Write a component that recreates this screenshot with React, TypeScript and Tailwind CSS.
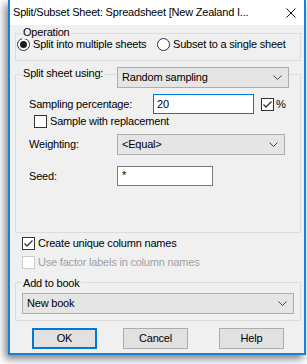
import React from "react";

function Chevron() {
	return (
		<svg width="9" height="5" viewBox="0 0 9 5" className="shrink-0">
			<path d="M0.5 0.5 L4.5 4.5 L8.5 0.5" fill="none" stroke="#444" strokeWidth="1" />
		</svg>
	);
}

function CheckBox({ checked, disabled }: { checked?: boolean; disabled?: boolean }) {
	return (
		<div
			className={`w-[13px] h-[13px] shrink-0 border bg-white flex items-center justify-center ${
				disabled ? "border-[#cccccc]" : "border-[#333333]"
			}`}
		>
			{checked && (
				<svg width="11" height="11" viewBox="0 0 11 11">
					<path d="M1.5 5.5 L4 8 L9.5 2.5" fill="none" stroke="#333" strokeWidth="1.3" />
				</svg>
			)}
		</div>
	);
}

function Radio({ checked }: { checked?: boolean }) {
	return (
		<div className="w-[13px] h-[13px] shrink-0 rounded-full border border-[#333333] bg-white flex items-center justify-center">
			{checked && <div className="w-[7px] h-[7px] rounded-full bg-[#1a1a1a]" />}
		</div>
	);
}

function Select({ value, width }: { value: string; width: string }) {
	return (
		<div
			className={`${width} h-[21px] border border-[#adadad] bg-[#e5e5e5] flex items-center justify-between pl-[4px] pr-[6px]`}
		>
			<span>{value}</span>
			<Chevron />
		</div>
	);
}

function Button({ label, focused }: { label: string; focused?: boolean }) {
	return (
		<div
			className={`w-[65px] h-[21px] bg-[#e1e1e1] flex items-center justify-center ${
				focused ? "border-2 border-[#0078d7]" : "border border-[#adadad]"
			}`}
		>
			{label}
		</div>
	);
}

export default function App() {
	return (
		<div className="w-[307px] h-[364px] bg-white pl-[8px] font-['Liberation_Sans',Arial,sans-serif] text-[11px] tracking-[-0.2px] text-black leading-[13px]">
			<div className="w-[298px] h-[355px] border-x-2 border-b-2 border-[#1c7fd6] bg-[#f0f0f0] flex flex-col shadow-[-3px_4px_8px_rgba(0,0,0,0.5)]">
				{/* title bar */}
				<div className="h-[25px] bg-white flex items-center justify-between pl-[3px] pr-[8px]">
					<span className="text-[11px]">Split/Subset Sheet: Spreadsheet [New Zealand I...</span>
					<svg width="10" height="10" viewBox="0 0 10 10">
						<path d="M0.5 0.5 L9.5 9.5 M9.5 0.5 L0.5 9.5" stroke="#111" strokeWidth="1" />
					</svg>
				</div>

				{/* Operation */}
				<div className="relative mt-[8px] ml-[5px] w-[286px] h-[28px] border border-[#dcdcdc]">
					<span className="absolute left-[6px] top-[-8px] px-[1px] bg-[#f0f0f0]">Operation</span>
					<div className="flex items-center pt-[4px] pl-[1px]">
						<div className="w-[140px] flex items-center gap-[3px]">
							<Radio checked />
							<span>Split into multiple sheets</span>
						</div>
						<div className="flex items-center gap-[3px]">
							<Radio />
							<span>Subset to a single sheet</span>
						</div>
					</div>
				</div>

				{/* Split sheet using */}
				<div className="relative mt-[13px] ml-[5px] w-[286px] h-[159px] border border-[#dcdcdc] flex flex-col pl-[13px]">
					<span className="absolute left-[6px] top-[-8px] px-[1px] bg-[#f0f0f0]">Split sheet using:</span>
					<div className="mt-[-8px] ml-[88px]">
						<Select value="Random sampling" width="w-[172px]" />
					</div>
					<div className="mt-[6px] flex items-center">
						<span className="w-[124px]">Sampling percentage:</span>
						<div className="w-[101px] h-[20px] border border-[#0078d7] bg-white flex items-center pl-[3px]">20</div>
						<div className="ml-[7px]">
							<CheckBox checked />
						</div>
						<span className="ml-[2px]">%</span>
					</div>
					<div className="mt-[1px] ml-[5px] flex items-center gap-[3px]">
						<CheckBox />
						<span>Sample with replacement</span>
					</div>
					<div className="mt-[6px] flex items-center">
						<span className="w-[88px]">Weighting:</span>
						<Select value="<Equal>" width="w-[168px]" />
					</div>
					<div className="mt-[11px] flex items-center">
						<span className="w-[88px]">Seed:</span>
						<div className="w-[96px] h-[20px] border border-[#7a7a7a] bg-white pl-[4px] pt-[2px]">*</div>
					</div>
				</div>

				{/* column name options */}
				<div className="mt-[4px] ml-[12px] flex items-center gap-[3px]">
					<CheckBox checked />
					<span>Create unique column names</span>
				</div>
				<div className="mt-[6px] ml-[12px] flex items-center gap-[3px] text-[#a0a0a0]">
					<CheckBox disabled />
					<span>Use factor labels in column names</span>
				</div>

				{/* Add to book */}
				<div className="relative mt-[13px] ml-[5px] w-[286px] h-[39px] border border-[#dcdcdc]">
					<span className="absolute left-[6px] top-[-6px] px-[1px] bg-[#f0f0f0]">Add to book</span>
					<div className="mt-[10px] ml-[6px]">
						<Select value="New book" width="w-[272px]" />
					</div>
				</div>

				{/* buttons */}
				<div className="mt-[7px] ml-[22px] flex items-center">
					<Button label="OK" focused />
					<div className="ml-[26px]">
						<Button label="Cancel" />
					</div>
					<div className="ml-[31px]">
						<Button label="Help" />
					</div>
				</div>
			</div>
		</div>
	);
}
